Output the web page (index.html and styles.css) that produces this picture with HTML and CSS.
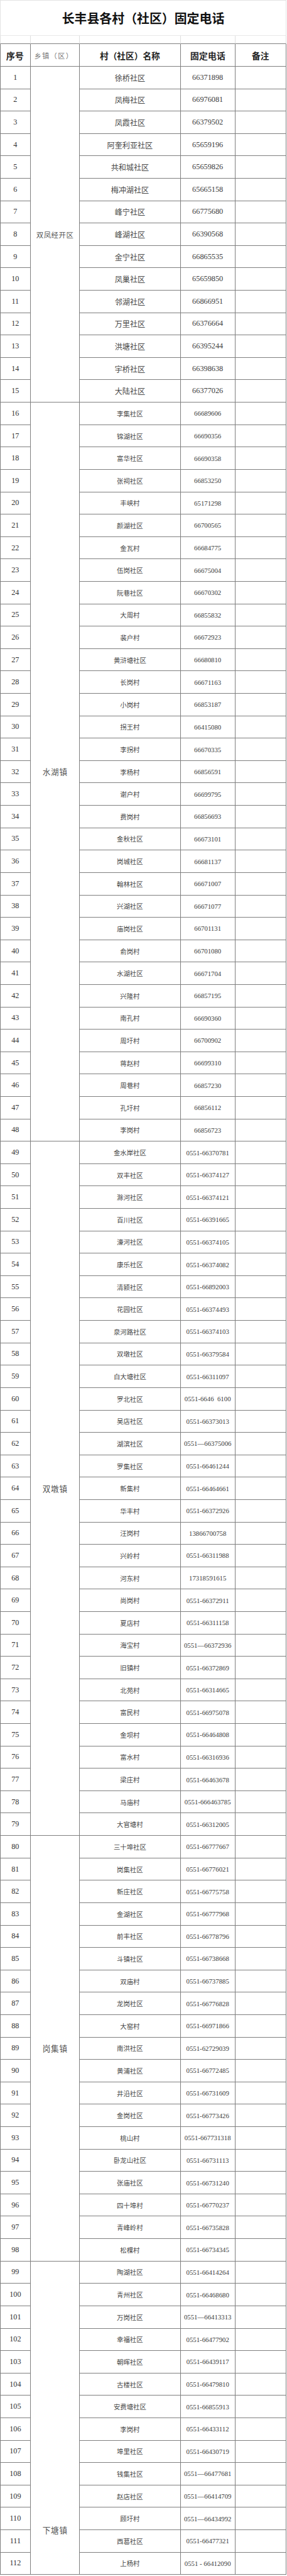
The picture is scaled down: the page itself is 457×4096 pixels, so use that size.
FILE: index.html
```html
<!DOCTYPE html>
<html lang="zh-CN">
<head>
<meta charset="utf-8">
<title>长丰县各村（社区）固定电话</title>
<link rel="stylesheet" href="styles.css">
</head>
<body>
<div class="sheet">
  <div class="title">长丰县各村（社区）固定电话</div>
  <div class="grid">
    <div class="row gap"><div class="c n"></div><div class="c t"></div><div class="c m"></div><div class="c p"></div><div class="c r"></div></div>
    <div class="row head"><div class="c n">序号</div><div class="c t town-head">乡镇（区）</div><div class="c m">村（社区）名称</div><div class="c p">固定电话</div><div class="c r">备注</div></div>

    <div class="row lg"><div class="c n">1</div><div class="c t town sf s15">双凤经开区</div><div class="c m">徐桥社区</div><div class="c p">66371898</div><div class="c r"></div></div>
    <div class="row lg"><div class="c n">2</div><div class="c m">凤梅社区</div><div class="c p">66976081</div><div class="c r"></div></div>
    <div class="row lg"><div class="c n">3</div><div class="c m">凤霞社区</div><div class="c p">66379502</div><div class="c r"></div></div>
    <div class="row lg"><div class="c n">4</div><div class="c m">阿奎利亚社区</div><div class="c p">65659196</div><div class="c r"></div></div>
    <div class="row lg"><div class="c n">5</div><div class="c m">共和城社区</div><div class="c p">65659826</div><div class="c r"></div></div>
    <div class="row lg"><div class="c n">6</div><div class="c m">梅冲湖社区</div><div class="c p">65665158</div><div class="c r"></div></div>
    <div class="row lg"><div class="c n">7</div><div class="c m">峰宁社区</div><div class="c p">66775680</div><div class="c r"></div></div>
    <div class="row lg"><div class="c n">8</div><div class="c m">峰湖社区</div><div class="c p">66390568</div><div class="c r"></div></div>
    <div class="row lg"><div class="c n">9</div><div class="c m">金宁社区</div><div class="c p">66865535</div><div class="c r"></div></div>
    <div class="row lg"><div class="c n">10</div><div class="c m">凤巢社区</div><div class="c p">65659850</div><div class="c r"></div></div>
    <div class="row lg"><div class="c n">11</div><div class="c m">邻湖社区</div><div class="c p">66866951</div><div class="c r"></div></div>
    <div class="row lg"><div class="c n">12</div><div class="c m">万里社区</div><div class="c p">66376664</div><div class="c r"></div></div>
    <div class="row lg"><div class="c n">13</div><div class="c m">洪塘社区</div><div class="c p">66395244</div><div class="c r"></div></div>
    <div class="row lg"><div class="c n">14</div><div class="c m">宇桥社区</div><div class="c p">66398638</div><div class="c r"></div></div>
    <div class="row lg"><div class="c n">15</div><div class="c m">大陆社区</div><div class="c p">66377026</div><div class="c r"></div></div>

    <div class="row"><div class="c n">16</div><div class="c t town s33">水湖镇</div><div class="c m">李集社区</div><div class="c p">66689606</div><div class="c r"></div></div>
    <div class="row"><div class="c n">17</div><div class="c m">锦湖社区</div><div class="c p">66690356</div><div class="c r"></div></div>
    <div class="row"><div class="c n">18</div><div class="c m">富华社区</div><div class="c p">66690358</div><div class="c r"></div></div>
    <div class="row"><div class="c n">19</div><div class="c m">张祠社区</div><div class="c p">66853250</div><div class="c r"></div></div>
    <div class="row"><div class="c n">20</div><div class="c m">丰峡村</div><div class="c p">65171298</div><div class="c r"></div></div>
    <div class="row"><div class="c n">21</div><div class="c m">颜湖社区</div><div class="c p">66700565</div><div class="c r"></div></div>
    <div class="row"><div class="c n">22</div><div class="c m">金瓦村</div><div class="c p">66684775</div><div class="c r"></div></div>
    <div class="row"><div class="c n">23</div><div class="c m">伍岗社区</div><div class="c p">66675004</div><div class="c r"></div></div>
    <div class="row"><div class="c n">24</div><div class="c m">阮巷社区</div><div class="c p">66670302</div><div class="c r"></div></div>
    <div class="row"><div class="c n">25</div><div class="c m">大周村</div><div class="c p">66855832</div><div class="c r"></div></div>
    <div class="row"><div class="c n">26</div><div class="c m">裴户村</div><div class="c p">66672923</div><div class="c r"></div></div>
    <div class="row"><div class="c n">27</div><div class="c m">黄浒塘社区</div><div class="c p">66680810</div><div class="c r"></div></div>
    <div class="row"><div class="c n">28</div><div class="c m">长岗村</div><div class="c p">66671163</div><div class="c r"></div></div>
    <div class="row"><div class="c n">29</div><div class="c m">小岗村</div><div class="c p">66853187</div><div class="c r"></div></div>
    <div class="row"><div class="c n">30</div><div class="c m">拐王村</div><div class="c p">66415080</div><div class="c r"></div></div>
    <div class="row"><div class="c n">31</div><div class="c m">李拐村</div><div class="c p">66670335</div><div class="c r"></div></div>
    <div class="row"><div class="c n">32</div><div class="c m">李杨村</div><div class="c p">66856591</div><div class="c r"></div></div>
    <div class="row"><div class="c n">33</div><div class="c m">谢户村</div><div class="c p">66699795</div><div class="c r"></div></div>
    <div class="row"><div class="c n">34</div><div class="c m">费岗村</div><div class="c p">66856693</div><div class="c r"></div></div>
    <div class="row"><div class="c n">35</div><div class="c m">金秋社区</div><div class="c p">66673101</div><div class="c r"></div></div>
    <div class="row"><div class="c n">36</div><div class="c m">岗城社区</div><div class="c p">66681137</div><div class="c r"></div></div>
    <div class="row"><div class="c n">37</div><div class="c m">翰林社区</div><div class="c p">66671007</div><div class="c r"></div></div>
    <div class="row"><div class="c n">38</div><div class="c m">兴湖社区</div><div class="c p">66671077</div><div class="c r"></div></div>
    <div class="row"><div class="c n">39</div><div class="c m">庙岗社区</div><div class="c p">66701131</div><div class="c r"></div></div>
    <div class="row"><div class="c n">40</div><div class="c m">俞岗村</div><div class="c p">66701080</div><div class="c r"></div></div>
    <div class="row"><div class="c n">41</div><div class="c m">水湖社区</div><div class="c p">66671704</div><div class="c r"></div></div>
    <div class="row"><div class="c n">42</div><div class="c m">兴隆村</div><div class="c p">66857195</div><div class="c r"></div></div>
    <div class="row"><div class="c n">43</div><div class="c m">南孔村</div><div class="c p">66690360</div><div class="c r"></div></div>
    <div class="row"><div class="c n">44</div><div class="c m">周圩村</div><div class="c p">66700902</div><div class="c r"></div></div>
    <div class="row"><div class="c n">45</div><div class="c m">蒋赵村</div><div class="c p">66699310</div><div class="c r"></div></div>
    <div class="row"><div class="c n">46</div><div class="c m">周巷村</div><div class="c p">66857230</div><div class="c r"></div></div>
    <div class="row"><div class="c n">47</div><div class="c m">孔圩村</div><div class="c p">66856112</div><div class="c r"></div></div>
    <div class="row"><div class="c n">48</div><div class="c m">李岗村</div><div class="c p">66856723</div><div class="c r"></div></div>

    <div class="row"><div class="c n">49</div><div class="c t town s31">双墩镇</div><div class="c m">金水岸社区</div><div class="c p">0551-66370781</div><div class="c r"></div></div>
    <div class="row"><div class="c n">50</div><div class="c m">双丰社区</div><div class="c p">0551-66374127</div><div class="c r"></div></div>
    <div class="row"><div class="c n">51</div><div class="c m">滁河社区</div><div class="c p">0551-66374121</div><div class="c r"></div></div>
    <div class="row"><div class="c n">52</div><div class="c m">百川社区</div><div class="c p">0551-66391665</div><div class="c r"></div></div>
    <div class="row"><div class="c n">53</div><div class="c m">濠河社区</div><div class="c p">0551-66374105</div><div class="c r"></div></div>
    <div class="row"><div class="c n">54</div><div class="c m">康乐社区</div><div class="c p">0551-66374082</div><div class="c r"></div></div>
    <div class="row"><div class="c n">55</div><div class="c m">清颍社区</div><div class="c p">0551-66892003</div><div class="c r"></div></div>
    <div class="row"><div class="c n">56</div><div class="c m">花园社区</div><div class="c p">0551-66374493</div><div class="c r"></div></div>
    <div class="row"><div class="c n">57</div><div class="c m">泉河路社区</div><div class="c p">0551-66374103</div><div class="c r"></div></div>
    <div class="row"><div class="c n">58</div><div class="c m">双墩社区</div><div class="c p">0551-66379584</div><div class="c r"></div></div>
    <div class="row"><div class="c n">59</div><div class="c m">白大塘社区</div><div class="c p">0551-66311097</div><div class="c r"></div></div>
    <div class="row"><div class="c n">60</div><div class="c m">罗北社区</div><div class="c p">0551-6646&nbsp;&nbsp;6100</div><div class="c r"></div></div>
    <div class="row"><div class="c n">61</div><div class="c m">吴店社区</div><div class="c p">0551-66373013</div><div class="c r"></div></div>
    <div class="row"><div class="c n">62</div><div class="c m">湖滨社区</div><div class="c p">0551—66375006</div><div class="c r"></div></div>
    <div class="row"><div class="c n">63</div><div class="c m">罗集社区</div><div class="c p">0551-66461244</div><div class="c r"></div></div>
    <div class="row"><div class="c n">64</div><div class="c m">新集村</div><div class="c p">0551-66464661</div><div class="c r"></div></div>
    <div class="row"><div class="c n">65</div><div class="c m">华丰村</div><div class="c p">0551-66372926</div><div class="c r"></div></div>
    <div class="row"><div class="c n">66</div><div class="c m">汪岗村</div><div class="c p">13866700758</div><div class="c r"></div></div>
    <div class="row"><div class="c n">67</div><div class="c m">兴岭村</div><div class="c p">0551-66311988</div><div class="c r"></div></div>
    <div class="row"><div class="c n">68</div><div class="c m">河东村</div><div class="c p">17318591615</div><div class="c r"></div></div>
    <div class="row"><div class="c n">69</div><div class="c m">尚岗村</div><div class="c p">0551-66372911</div><div class="c r"></div></div>
    <div class="row"><div class="c n">70</div><div class="c m">夏店村</div><div class="c p">0551-66311158</div><div class="c r"></div></div>
    <div class="row"><div class="c n">71</div><div class="c m">海宝村</div><div class="c p">0551—66372936</div><div class="c r"></div></div>
    <div class="row"><div class="c n">72</div><div class="c m">旧镇村</div><div class="c p">0551-66372869</div><div class="c r"></div></div>
    <div class="row"><div class="c n">73</div><div class="c m">北苑村</div><div class="c p">0551-66314665</div><div class="c r"></div></div>
    <div class="row"><div class="c n">74</div><div class="c m">富民村</div><div class="c p">0551-66975078</div><div class="c r"></div></div>
    <div class="row"><div class="c n">75</div><div class="c m">金坝村</div><div class="c p">0551-66464808</div><div class="c r"></div></div>
    <div class="row"><div class="c n">76</div><div class="c m">富水村</div><div class="c p">0551-66316936</div><div class="c r"></div></div>
    <div class="row"><div class="c n">77</div><div class="c m">梁庄村</div><div class="c p">0551-66463678</div><div class="c r"></div></div>
    <div class="row"><div class="c n">78</div><div class="c m">马庙村</div><div class="c p">0551-666463785</div><div class="c r"></div></div>
    <div class="row"><div class="c n">79</div><div class="c m">大官塘村</div><div class="c p">0551-66312005</div><div class="c r"></div></div>

    <div class="row"><div class="c n">80</div><div class="c t town s19">岗集镇</div><div class="c m">三十埠社区</div><div class="c p">0551-66777667</div><div class="c r"></div></div>
    <div class="row"><div class="c n">81</div><div class="c m">岗集社区</div><div class="c p">0551-66776021</div><div class="c r"></div></div>
    <div class="row"><div class="c n">82</div><div class="c m">新庄社区</div><div class="c p">0551-66775758</div><div class="c r"></div></div>
    <div class="row"><div class="c n">83</div><div class="c m">金湖社区</div><div class="c p">0551-66777968</div><div class="c r"></div></div>
    <div class="row"><div class="c n">84</div><div class="c m">前丰社区</div><div class="c p">0551-66778796</div><div class="c r"></div></div>
    <div class="row"><div class="c n">85</div><div class="c m">斗镇社区</div><div class="c p">0551-66738668</div><div class="c r"></div></div>
    <div class="row"><div class="c n">86</div><div class="c m">双庙村</div><div class="c p">0551-66737885</div><div class="c r"></div></div>
    <div class="row"><div class="c n">87</div><div class="c m">龙岗社区</div><div class="c p">0551-66776828</div><div class="c r"></div></div>
    <div class="row"><div class="c n">88</div><div class="c m">大窑村</div><div class="c p">0551-66971866</div><div class="c r"></div></div>
    <div class="row"><div class="c n">89</div><div class="c m">南洪社区</div><div class="c p">0551-62729039</div><div class="c r"></div></div>
    <div class="row"><div class="c n">90</div><div class="c m">黄浦社区</div><div class="c p">0551-66772485</div><div class="c r"></div></div>
    <div class="row"><div class="c n">91</div><div class="c m">井沿社区</div><div class="c p">0551-66731609</div><div class="c r"></div></div>
    <div class="row"><div class="c n">92</div><div class="c m">金岗社区</div><div class="c p">0551-66773426</div><div class="c r"></div></div>
    <div class="row"><div class="c n">93</div><div class="c m">桃山村</div><div class="c p">0551-667731318</div><div class="c r"></div></div>
    <div class="row"><div class="c n">94</div><div class="c m">卧龙山社区</div><div class="c p">0551-66731113</div><div class="c r"></div></div>
    <div class="row"><div class="c n">95</div><div class="c m">张庙社区</div><div class="c p">0551-66731240</div><div class="c r"></div></div>
    <div class="row"><div class="c n">96</div><div class="c m">四十埠村</div><div class="c p">0551-66770237</div><div class="c r"></div></div>
    <div class="row"><div class="c n">97</div><div class="c m">青峰岭村</div><div class="c p">0551-66735828</div><div class="c r"></div></div>
    <div class="row"><div class="c n">98</div><div class="c m">松棵村</div><div class="c p">0551-66734345</div><div class="c r"></div></div>

    <div class="row"><div class="c n">99</div><div class="c t town s14 cut">下塘镇</div><div class="c m">陶湖社区</div><div class="c p">0551-66414264</div><div class="c r"></div></div>
    <div class="row"><div class="c n">100</div><div class="c m">青州社区</div><div class="c p">0551-66468680</div><div class="c r"></div></div>
    <div class="row"><div class="c n">101</div><div class="c m">万岗社区</div><div class="c p">0551—66413313</div><div class="c r"></div></div>
    <div class="row"><div class="c n">102</div><div class="c m">幸福社区</div><div class="c p">0551-66477902</div><div class="c r"></div></div>
    <div class="row"><div class="c n">103</div><div class="c m">朝晖社区</div><div class="c p">0551-66439117</div><div class="c r"></div></div>
    <div class="row"><div class="c n">104</div><div class="c m">古楼社区</div><div class="c p">0551-66479810</div><div class="c r"></div></div>
    <div class="row"><div class="c n">105</div><div class="c m">安费塘社区</div><div class="c p">0551-66855913</div><div class="c r"></div></div>
    <div class="row"><div class="c n">106</div><div class="c m">李岗村</div><div class="c p">0551-66433112</div><div class="c r"></div></div>
    <div class="row"><div class="c n">107</div><div class="c m">埠里社区</div><div class="c p">0551-66430719</div><div class="c r"></div></div>
    <div class="row"><div class="c n">108</div><div class="c m">钱集社区</div><div class="c p">0551—66477681</div><div class="c r"></div></div>
    <div class="row"><div class="c n">109</div><div class="c m">赵店社区</div><div class="c p">0551—66414709</div><div class="c r"></div></div>
    <div class="row"><div class="c n">110</div><div class="c m">顾圩村</div><div class="c p">0551—66434992</div><div class="c r"></div></div>
    <div class="row"><div class="c n">111</div><div class="c m">西葛社区</div><div class="c p">0551-66477321</div><div class="c r"></div></div>
    <div class="row"><div class="c n">112</div><div class="c m">上杨村</div><div class="c p">0551&nbsp;-&nbsp;66412090</div><div class="c r"></div></div>
  </div>
</div>
</body>
</html>
```

FILE: styles.css
```css
* {
  box-sizing: border-box;
  margin: 0;
  padding: 0;
}

body {
  margin: 0;
  background: #fff;
  font-family: "Noto Sans CJK SC", "Noto Sans", sans-serif;
  color: #444;
}

.sheet {
  width: 456px;
}

.title {
  height: 56.65px;
  display: flex;
  align-items: center;
  justify-content: center;
  font-size: 19.9px;
  font-weight: 700;
  color: #111;
  border: 1px solid #e3e3e3;
  border-bottom-color: #e8e8e8;
}

.grid {
  display: grid;
  grid-template-columns: 48.7px 78.3px 160.8px 86.8px 81.4px;
  grid-template-rows: 13.7px 35.63px;
  grid-auto-rows: 35.62px;
}

.row {
  display: contents;
}

.c {
  display: flex;
  align-items: center;
  justify-content: center;
  border-right: 1px solid #7f7f7f;
  border-bottom: 1px solid #7f7f7f;
  white-space: nowrap;
  overflow: hidden;
}

.n { grid-column: 1; border-left: 1px solid #7f7f7f; }
.t { grid-column: 2; }
.m { grid-column: 3; }
.p { grid-column: 4; }
.r { grid-column: 5; }

/* thin spacer row under the title */
.gap .c {
  border-right-color: #dedede;
}
.gap .n {
  border-left-color: #dedede;
}

/* header row */
.head .c {
  font-size: 13.7px;
  font-weight: 700;
  color: #222;
}
.head .town-head {
  justify-content: flex-start;
  padding-left: 6px;
  font-size: 11px;
  font-weight: 400;
  letter-spacing: 1.5px;
  color: #777;
}

/* data cells */
.n {
  font-family: "Liberation Serif", serif;
  font-size: 12.2px;
  color: #333;
}
.m {
  font-size: 10.4px;
  color: #484848;
}
.p {
  font-family: "Liberation Serif", serif;
  font-size: 10.8px;
  color: #3c3c3c;
}
.lg .m {
  font-size: 12.1px;
}
.lg .p {
  font-size: 12.3px;
}

/* township cells spanning several rows */
.town {
  font-size: 12.6px;
  letter-spacing: 0.8px;
  padding-left: 0.8px;
  color: #555;
  line-height: 18px;
}
.town.sf {
  font-size: 11.4px;
  letter-spacing: 0.6px;
  padding-left: 0.6px;
}
.s15 { grid-row: span 15; }
.s33 { grid-row: span 33; }
.s31 { grid-row: span 31; }
.s19 { grid-row: span 19; }
.s14 { grid-row: span 14; }

.town.cut {
  align-items: flex-start;
  padding-top: 418.8px;
}
```
